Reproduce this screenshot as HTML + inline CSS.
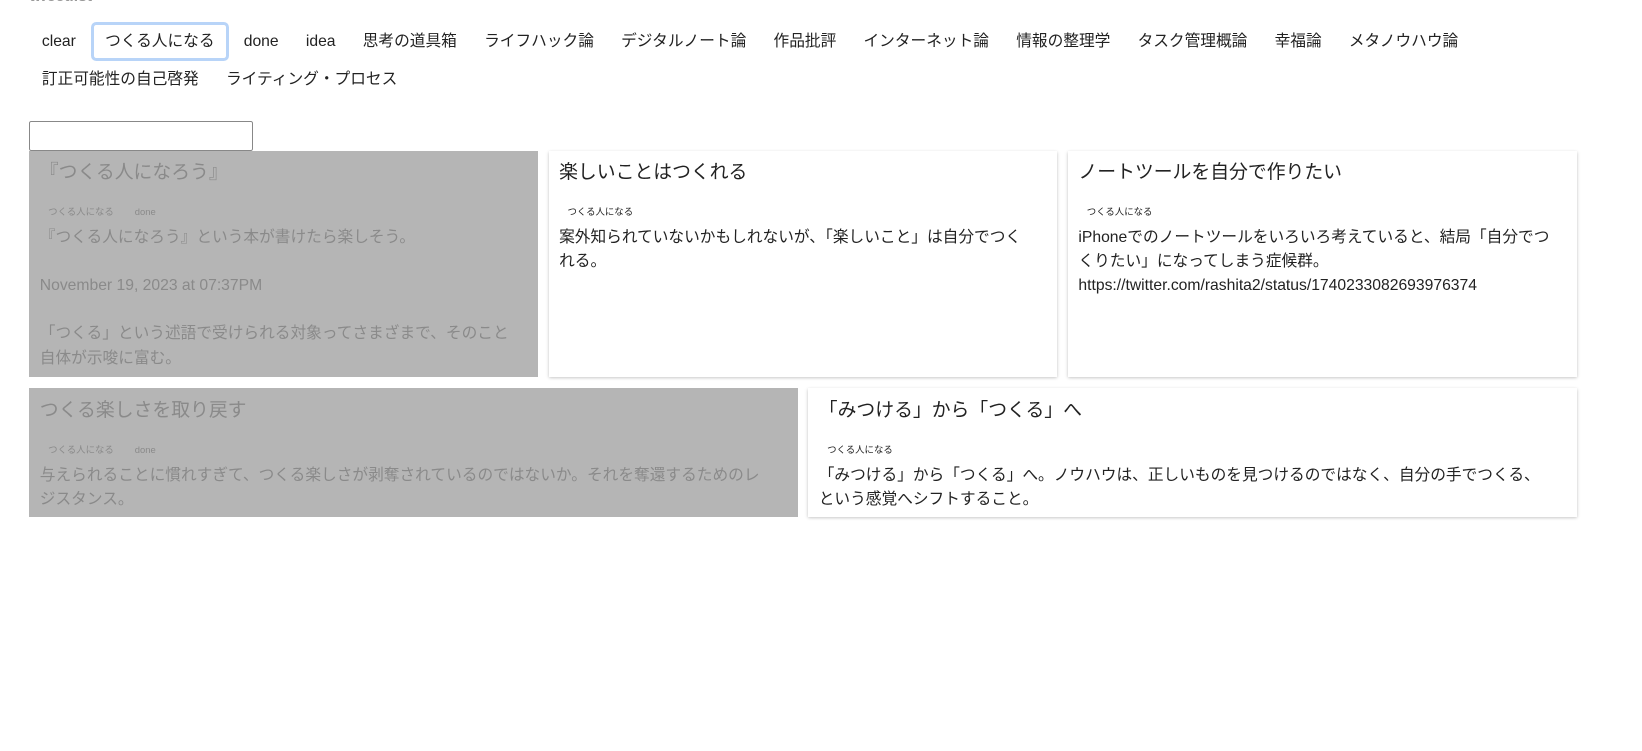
<!DOCTYPE html>
<html><head><meta charset="utf-8"><style>
html,body{margin:0;background:#fff;width:1642px;height:751px;overflow:hidden}
#w{zoom:1.047;position:relative;width:1568px;height:717px;font-family:"Liberation Sans","Noto Sans CJK JP",sans-serif;color:#222}
.top{position:absolute;left:28px;top:-11px;font-weight:bold;color:#999;font-size:15px}
.tags{position:absolute;left:28px;top:21px;width:1420px;font-size:15px}
.tags span{display:inline-block;padding:0 12px;height:36px;line-height:36px;margin-right:2px}
.tags span.sel{border:3px solid #b8d4f8;border-radius:5px;height:32px;line-height:32px;padding:0 11px;background:#fff}
input{position:absolute;left:28px;top:116px;width:212px;height:26px;border:1px solid #888;border-radius:2px;margin:0;padding:0}
.card{position:absolute;background:#fff;box-shadow:0 1px 3px rgba(0,0,0,.25);box-sizing:border-box;padding:8px 10px}
.card.done{background:#b5b5b5;color:#8a8a8a;box-shadow:none}
.card h3{margin:0;font-size:18px;font-weight:normal;line-height:24px;height:24px}
.card .t{font-size:9px;margin:20px 0 0 8px;height:20px;line-height:14px}
.card .t b{font-weight:normal;margin-right:20px}
.card p{margin:0;font-size:15px;line-height:23px}
</style></head><body><div id="w">
<div class="top">tweetlist</div>
<div class="tags"><span>clear</span><span class="sel">つくる人になる</span><span>done</span><span>idea</span><span>思考の道具箱</span><span>ライフハック論</span><span>デジタルノート論</span><span>作品批評</span><span>インターネット論</span><span>情報の整理学</span><span>タスク管理概論</span><span>幸福論</span><span>メタノウハウ論</span><br><span>訂正可能性の自己啓発</span><span>ライティング・プロセス</span></div>
<input>
<div class="card done" style="left:28px;top:144px;width:486px;height:216px"><h3>『つくる人になろう』</h3><div class="t"><b>つくる人になる</b><b>done</b></div><p>『つくる人になろう』という本が書けたら楽しそう。<br><br>November 19, 2023 at 07:37PM<br><br>「つくる」という述語で受けられる対象ってさまざまで、そのこと<br>自体が示唆に富む。</p></div>
<div class="card" style="left:524px;top:144px;width:486px;height:216px"><h3>楽しいことはつくれる</h3><div class="t"><b>つくる人になる</b></div><p>案外知られていないかもしれないが、「楽しいこと」は自分でつく<br>れる。</p></div>
<div class="card" style="left:1020px;top:144px;width:486px;height:216px"><h3>ノートツールを自分で作りたい</h3><div class="t"><b>つくる人になる</b></div><p>iPhoneでのノートツールをいろいろ考えていると、結局「自分でつ<br>くりたい」になってしまう症候群。<br>https://twitter.com/rashita2/status/1740233082693976374</p></div>
<div class="card done" style="left:28px;top:371px;width:734px;height:123px"><h3>つくる楽しさを取り戻す</h3><div class="t"><b>つくる人になる</b><b>done</b></div><p>与えられることに慣れすぎて、つくる楽しさが剥奪されているのではないか。それを奪還するためのレ<br>ジスタンス。</p></div>
<div class="card" style="left:772px;top:371px;width:734px;height:123px"><h3>「みつける」から「つくる」へ</h3><div class="t"><b>つくる人になる</b></div><p>「みつける」から「つくる」へ。ノウハウは、正しいものを見つけるのではなく、自分の手でつくる、<br>という感覚へシフトすること。</p></div>
</div></body></html>
